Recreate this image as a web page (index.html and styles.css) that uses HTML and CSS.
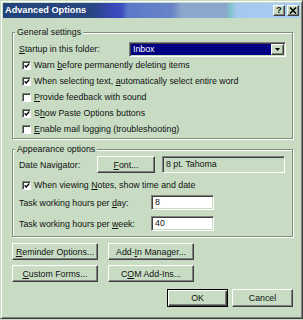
FILE: index.html
```html
<!DOCTYPE html>
<html>
<head>
<meta charset="utf-8">
<link rel="stylesheet" href="styles.css">
</head>
<body>
<div class="window">
  <div class="titlebar">
    <span class="title">Advanced Options</span>
    <div class="tbtns">
      <span class="tbtn help">?</span>
      <span class="tbtn close"><svg width="8" height="7" viewBox="0 0 8 7"><path d="M1 0.5 L7 6.5 M7 0.5 L1 6.5" stroke="#000" stroke-width="1.6" fill="none"/></svg></span>
    </div>
  </div>
  <div class="body">
    <fieldset class="group g1">
      <legend>General settings</legend>
      <div class="row startup">
        <span class="lbl w110"><u>S</u>tartup in this folder:</span>
        <div class="select">
          <span class="sel-val">Inbox</span>
          <span class="sel-btn"><svg width="5" height="3" viewBox="0 0 5 3"><path d="M0 0 H5 L2.5 3 Z" fill="#000"/></svg></span>
        </div>
      </div>
      <div class="check"><span class="box on"><svg width="7" height="7" viewBox="0 0 7 7"><path d="M0.8 3.2 L2.6 5.2 L6.2 1.2" stroke="#000" stroke-width="1.5" fill="none"/></svg></span><span>Warn <u>b</u>efore permanently deleting items</span></div>
      <div class="check"><span class="box on"><svg width="7" height="7" viewBox="0 0 7 7"><path d="M0.8 3.2 L2.6 5.2 L6.2 1.2" stroke="#000" stroke-width="1.5" fill="none"/></svg></span><span>When selecting text, <u>a</u>utomatically select entire word</span></div>
      <div class="check"><span class="box"></span><span><u>P</u>rovide feedback with sound</span></div>
      <div class="check"><span class="box on"><svg width="7" height="7" viewBox="0 0 7 7"><path d="M0.8 3.2 L2.6 5.2 L6.2 1.2" stroke="#000" stroke-width="1.5" fill="none"/></svg></span><span>S<u>h</u>ow Paste Options buttons</span></div>
      <div class="check"><span class="box"></span><span><u>E</u>nable mail logging (troubleshooting)</span></div>
    </fieldset>
    <fieldset class="group g2">
      <legend>Appearance options</legend>
      <div class="row daterow">
        <span class="lbl w78">Date Navigator:</span>
        <span class="btn fontbtn"><u>F</u>ont...</span>
        <span class="fontbox">8 pt. Tahoma</span>
      </div>
      <div class="check notes"><span class="box on"><svg width="7" height="7" viewBox="0 0 7 7"><path d="M0.8 3.2 L2.6 5.2 L6.2 1.2" stroke="#000" stroke-width="1.5" fill="none"/></svg></span><span>When viewing <u>N</u>otes, show time and date</span></div>
      <div class="row inrow">
        <span class="lbl w132">Task working hours per <u>d</u>ay:</span>
        <span class="input">8</span>
      </div>
      <div class="row inrow week">
        <span class="lbl w132">Task working hours per <u>w</u>eek:</span>
        <span class="input">40</span>
      </div>
    </fieldset>
    <div class="btnrow r1">
      <span class="btn wide"><u>R</u>eminder Options...</span>
      <span class="btn wide">Add-<u>I</u>n Manager...</span>
    </div>
    <div class="btnrow r2">
      <span class="btn wide"><u>C</u>ustom Forms...</span>
      <span class="btn wide">C<u>O</u>M Add-Ins...</span>
    </div>
    <div class="okrow">
      <span class="btn dlg default">OK</span>
      <span class="btn dlg">Cancel</span>
    </div>
  </div>
</div>
</body>
</html>
```

FILE: styles.css
```css
* { box-sizing: border-box; margin: 0; padding: 0; }
html, body { width: 303px; height: 320px; overflow: hidden; }
body {
  font-family: "Liberation Sans", Arial, sans-serif;
  font-size: 8.8px;
  color: #111;
  background: #c7dcc3;
}
u { text-decoration: underline; text-underline-offset: 1px; }

.window {
  width: 303px;
  height: 319px;
  background: #c7dcc3;
  border: 1px solid;
  border-color: #c7dcc3 #404040 #404040 #c7dcc3;
  box-shadow: inset 1px 1px 0 #fff, inset -1px -1px 0 #808080;
  padding: 2px;
  display: flex;
  flex-direction: column;
}

.titlebar {
  height: 15px;
  display: flex;
  align-items: center;
  padding: 0 1px 0 2px;
  background: linear-gradient(to right, #22447a 0%, #2a4682 30%, #3848b8 37%, #3c4ec0 40%, #5a78c8 42%, #6a84c8 57%, #8ca6cc 60%, #8ca6cc 75%, #7cc4c8 76.5%, #a6c8ee 78.5%, #a8ccf2 100%);
}
.title {
  color: #fff;
  font-weight: bold;
  font-size: 9.2px;
  line-height: 15px;
}
.tbtns { margin-left: auto; display: flex; gap: 2px; }
.tbtn {
  width: 12px;
  height: 11px;
  background: #c7dcc3;
  border: 1px solid;
  border-color: #fff #404040 #404040 #fff;
  box-shadow: inset -1px -1px 0 #808080;
  display: flex;
  align-items: center;
  justify-content: center;
  font-weight: bold;
  font-size: 9px;
  line-height: 9px;
}

.body {
  flex: 1;
  display: flex;
  flex-direction: column;
  padding: 8px 7px 0 9px;
}

.group {
  border: 1px solid #7f8f7d;
  box-shadow: inset 1px 1px 0 #fff, 1px 1px 0 #fff;
  padding: 3px 6px 1px 6px;
  min-width: 0;
}
.group legend {
  line-height: 12px;
  padding: 0 2px;
  margin-left: -4px;
  background: #c7dcc3;
}
.g2 { margin-top: 4px; padding: 1px 6px 4px 6px; }

.row { display: flex; align-items: center; height: 16px; }
.lbl { flex: none; white-space: nowrap; }
.w110 { width: 110px; }
.w78 { width: 78px; }
.w132 { width: 132px; }

.select {
  width: 158px;
  height: 15px;
  border: 1px solid;
  border-color: #808080 #fff #fff #808080;
  box-shadow: inset 1px 1px 0 #404040, inset -1px -1px 0 #c7dcc3;
  background: #fff;
  padding: 1px;
  display: flex;
}
.sel-val {
  flex: 1;
  background: #000080;
  color: #fff;
  line-height: 11px;
  padding-left: 2px;
}
.sel-btn {
  width: 13px;
  height: 11px;
  background: #c7dcc3;
  border: 1px solid;
  border-color: #fff #404040 #404040 #fff;
  box-shadow: inset -1px -1px 0 #808080;
  display: flex;
  align-items: center;
  justify-content: center;
}

.check {
  display: flex;
  align-items: center;
  height: 16px;
  padding-left: 3px;
  gap: 3px;
  white-space: nowrap;
}
.box {
  flex: none;
  width: 9px;
  height: 9px;
  background: #fff;
  border: 1px solid;
  border-color: #808080 #fff #fff #808080;
  box-shadow: inset 1px 1px 0 #404040;
  display: flex;
  align-items: center;
  justify-content: center;
}
.box svg { margin: 1px 0 0 1px; }

.daterow { height: 17px; }
.btn {
  display: flex;
  align-items: center;
  justify-content: center;
  height: 17px;
  background: #c7dcc3;
  border: 1px solid;
  border-color: #fff #404040 #404040 #fff;
  box-shadow: inset -1px -1px 0 #808080;
  white-space: nowrap;
}
.fontbtn { width: 58px; }
.fontbox {
  margin-left: 7px;
  width: 123px;
  height: 17px;
  border: 1px solid;
  border-color: #808080 #fff #fff #808080;
  box-shadow: inset 1px 1px 0 #404040;
  padding: 1px 0 0 3px;
  line-height: 13px;
}
.notes { margin-top: 4px; }
.inrow { height: 17px; margin-top: 1px; }
.inrow.week { margin-top: 4px; }
.input {
  width: 63px;
  height: 15px;
  background: #fff;
  border: 1px solid;
  border-color: #808080 #fff #fff #808080;
  box-shadow: inset 1px 1px 0 #404040, inset -1px -1px 0 #c7dcc3;
  padding-left: 3px;
  line-height: 13px;
}

.btnrow { display: flex; gap: 10px; }
.r1 { margin-top: 6px; }
.r2 { margin-top: 5px; }
.wide { width: 86px; }
.okrow { display: flex; justify-content: flex-end; gap: 4px; margin-top: 7px; }
.dlg { width: 61px; height: 18px; }
.default {
  border: 1px solid #000;
  box-shadow: inset 1px 1px 0 #fff, inset -1px -1px 0 #404040, inset -2px -2px 0 #808080;
}
```
